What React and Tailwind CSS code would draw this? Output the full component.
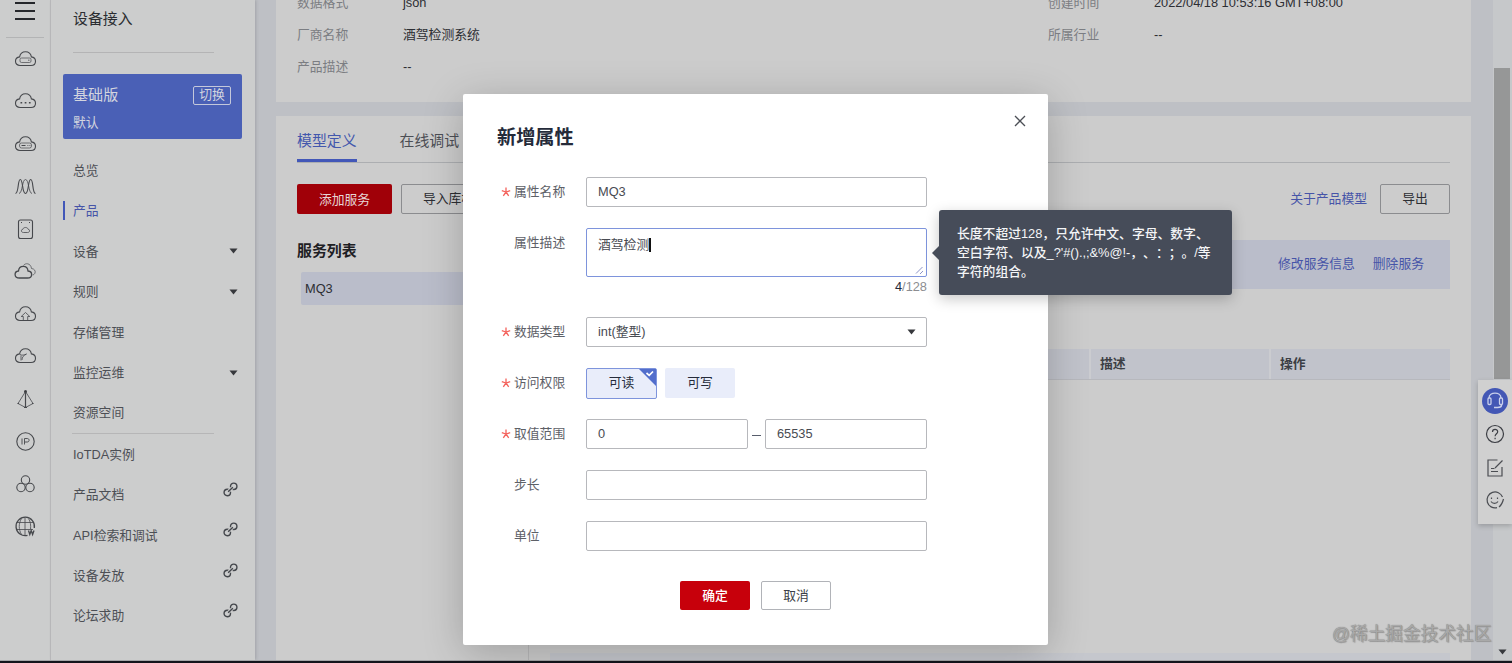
import React from 'react';

const CLOUD = 'M6 17.5 C3.2 17.5 1.5 15.6 1.5 13.2 C1.5 10.8 3.2 9.2 5.6 8.9 C6.2 5.8 8.6 3.8 11.5 3.8 C14.4 3.8 16.8 5.8 17.4 8.9 C19.8 9.2 21.5 10.8 21.5 13.2 C21.5 15.6 19.8 17.5 17 17.5 Z';

const railIcons = [
  <>
    <path d={CLOUD} />
    <rect x="6" y="10" width="11" height="4.5" rx="1.5" strokeWidth=".7" />
    <path d="M14 12.2h1.5" strokeWidth=".8" />
  </>,
  <>
    <path d={CLOUD} />
    <path d="M6.500 12.800h1.700M10.700 12.800h1.700M14.900 12.800h1.700" strokeWidth="1.600" />
  </>,
  <>
    <path d={CLOUD} />
    <rect x="5.5" y="10" width="12" height="5" rx="2" strokeWidth=".7" />
    <path d="M7.5 12.5h4M13.5 12.5h.8M15.5 12.5h.8" strokeWidth="1.2" />
  </>,
  <>
    <path d="M1.500 18.500C5 18 3.500 4.500 6.300 4.500S8 18.500 11.500 18.500 13.800 4.500 16.700 4.500 18 18 21.500 18.500" />
    <path d="M5 18.500C8.700 18 8 4.500 11.500 4.500S14.300 18 18 18.500" strokeWidth=".8" />
  </>,
  <>
    <rect x="4.500" y="2" width="14" height="18.500" rx="2" />
    <path d="M7 4.500h1M15 4.500h1" />
    <path d="M9.500 14.500c-2.700 0-2.700-3 -.6-3.300 .6-2.300 4.600-2.300 5.200 0 2.100 .3 2.100 3.300-.6 3.300z" strokeWidth=".8" />
  </>,
  <>
    <path d="M5.500 18C-.2 18-.2 11.500 4.500 11 5 4.800 13.500 4.800 14 11 19 11.500 18.800 18 13.500 18z" strokeWidth="1.300" />
    <path d="M9.500 5.500C11 2.800 16.800 2.800 17.500 8.500 22.500 9 22 14.500 18.500 15" strokeWidth=".7" />
  </>,
  <>
    <path d={CLOUD} />
    <path d="M9.300 17v-3.500H7.200L11.500 9.500l4.300 4h-2.100V17" strokeWidth=".8" />
  </>,
  <>
    <path d={CLOUD} />
    <path d="M6 9.500c2 1 4 .8 6.500-.5M8 15c0-3 1.500-4.500 4.500-6M7 10.500v5" strokeWidth=".8" />
  </>,
  <>
    <path d="M11.500 3.500L4 15.500l7.500 4 7.500-4z" strokeWidth=".8" />
    <path d="M11.500 3v16.500" strokeWidth="1.200" />
    <circle cx="11.500" cy="3.500" r="1" fill="#333" />
    <path d="M3.500 15.500h1.500M18 15.500h1.500M10 19.500h3" />
  </>,
  <>
    <circle cx="11.500" cy="11.500" r="8.700" />
    <path d="M8 8.500v6M10.500 14.500v-6h2.800c2.400 0 2.400 3.500 0 3.500h-2.800" strokeWidth=".9" />
  </>,
  <>
    <circle cx="11.500" cy="7" r="4.200" />
    <circle cx="7" cy="14.500" r="4.200" />
    <circle cx="16" cy="14.500" r="4.200" />
  </>,
  <>
    <path d="M13.500 20.300A9.200 9.200 0 1 1 20.300 13" strokeWidth="1.300" />
    <path d="M11 2.500v18M2.500 7.500h17M2 14.500h17M7.500 3.500c-3 5-3 11 0 16M14.500 3.500c2 3 2.500 7 2 10.500" strokeWidth=".8" />
    <path d="M14.500 15.500l1.300 4 1.400-4 1.400 4 1.400-4" strokeWidth="1.300" />
  </>,
];

const menuTop = [
  { name: '总览' },
  { name: '产品', active: true },
  { name: '设备', arrow: true },
  { name: '规则', arrow: true },
  { name: '存储管理' },
  { name: '监控运维', arrow: true },
  { name: '资源空间' },
];

const menuBottom = [
  { name: 'IoTDA实例' },
  { name: '产品文档', link: true },
  { name: 'API检索和调试', link: true },
  { name: '设备发放', link: true },
  { name: '论坛求助', link: true },
];

const Caret = () => (
  <svg width="9" height="6" viewBox="0 0 9 6" fill="#36383c">
    <path d="M.5.500h8L4.500 5.500z" />
  </svg>
);

const LinkIcon = () => (
  <svg width="15" height="15" viewBox="0 0 14 14" fill="none" stroke="#44474c" strokeWidth="1.300" className="-mt-[11px]">
    <circle cx="4" cy="9.800" r="3" />
    <circle cx="10" cy="4" r="3" />
    <path d="M5.200 8.600L8.800 5.200" stroke="#cccdcd" strokeWidth="3" />
    <path d="M4.800 9L9.200 4.800" />
  </svg>
);

const Rail = () => (
  <div className="w-[51px] shrink-0 border-r border-[#bcbcbe] flex flex-col items-center">
    <div className="h-[38px] w-[38px] shrink-0 border-b border-[#b3b4b5] flex flex-col items-center gap-[6px] pt-[2px]">
      <span className="w-5 h-[2px] bg-[#25272b]" />
      <span className="w-5 h-[2px] bg-[#25272b]" />
      <span className="w-5 h-[2px] bg-[#25272b]" />
    </div>
    <div className="flex flex-col">
      {railIcons.map((icon, i) => (
        <div key={i} className="h-[42.500px] flex items-center justify-center">
          <svg width="23" height="23" viewBox="0 0 23 23" fill="none" stroke="#46484c" strokeWidth="1.100">
            {icon}
          </svg>
        </div>
      ))}
    </div>
  </div>
);

const MenuItem = ({ item }) => (
  <div className="h-[40.400px] flex items-center justify-between pl-[10px] pr-[4px] relative">
    {item.active && <span className="absolute left-0 top-[10px] w-[2px] h-[19px] bg-[#4257b8]" />}
    <span className={item.active ? 'text-[#4654a8]' : 'text-[#4c4f55]'}>{item.name}</span>
    {item.arrow && <Caret />}
    {item.link && <LinkIcon />}
  </div>
);

const Sidebar = () => (
  <div className="w-[204px] shrink-0 pl-3 pr-[13px] shadow-[1px_0_3px_rgba(60,60,70,0.22)] relative">
    <div className="h-[53px] mx-[10px] mr-[28px] border-b border-[#b4b4b5] pt-[7px] text-[14.900px] leading-6 text-[#2b2d31]">
      设备接入
    </div>
    <div className="mt-[21px] h-[65px] rounded-[2px] bg-[#4a60b6] px-[10px] text-[#d3d5df] flex flex-col">
      <div className="h-[42px] pr-[1px] flex items-center justify-between">
        <span className="text-[15.100px]">基础版</span>
        <span className="border border-[#c4c8db] rounded-[2px] w-[38px] h-[19px] flex items-center justify-center leading-none">
          切换
        </span>
      </div>
      <span className="leading-[14px]">默认</span>
    </div>
    <div className="pt-[11.500px]">
      {menuTop.map((item) => (
        <MenuItem key={item.name} item={item} />
      ))}
    </div>
    <div className="ml-[9px] mr-[28px] border-t border-[#b6b6b7]" />
    <div>
      {menuBottom.map((item) => (
        <MenuItem key={item.name} item={item} />
      ))}
    </div>
  </div>
);

const InfoRow = ({ label, value, label2, value2 }) => (
  <div className="h-8 flex items-center">
    <span className="w-[106px] text-[#7b7d82]">{label}</span>
    <span className="w-[645px] text-[#2c2e33]">{value}</span>
    <span className="w-[106px] text-[#7b7d82]">{label2}</span>
    <span className="text-[#2c2e33]">{value2}</span>
  </div>
);

const Content = () => (
  <div className="flex-1 bg-[#bec0c5] pl-[21px] pr-[22px] flex flex-col gap-[14px] overflow-hidden">
    <div className="h-[102px] shrink-0 bg-[#cccccc] pl-[21px] overflow-hidden">
      <div className="-mt-[13px]">
        <InfoRow label="数据格式" value="json" label2="创建时间" value2="2022/04/18 10:53:16 GMT+08:00" />
        <InfoRow label="厂商名称" value="酒驾检测系统" label2="所属行业" value2="--" />
        <InfoRow label="产品描述" value="--" />
      </div>
    </div>
    <div className="flex-1 bg-[#cccccc] px-[21px]">
      <div className="h-[47px] border-b border-[#acaeb1] flex gap-[43px] text-[14.900px] leading-[50px]">
        <span className="h-[46px] border-b-[3px] border-[#4257b8] text-[#4257ad]">模型定义</span>
        <span className="text-[#4c4f55]">在线调试</span>
      </div>
      <div className="mt-[21px] flex items-center">
        <button className="w-[95px] h-[30px] rounded-[2px] bg-[#a00008] text-[#e6d5d5] pt-[1px]">添加服务</button>
        <button className="ml-[9px] w-[108px] h-[30px] rounded-[2px] border border-[#8b8c8f] text-[#2c2e33]">导入库模型</button>
        <span className="ml-auto text-[#4654a8]">关于产品模型</span>
        <button className="ml-[13px] w-[70px] h-[30px] rounded-[2px] border border-[#8b8c8f] text-[#2c2e33]">导出</button>
      </div>
      <div className="flex mt-[25px] h-[421px]">
        <div className="w-[232px] shrink-0 border-r border-[#b9b9ba]">
          <div className="h-[33px] leading-6 text-[14.900px] font-bold text-[#1e2024]">服务列表</div>
          <div className="ml-1 h-[33px] bg-[#babdca] rounded-l-[2px] pl-[4px] flex items-center text-[#2c2e33]">MQ3</div>
        </div>
        <div className="flex-1 pl-[21px] flex flex-col">
          <div className="mt-[1px] h-[49px] bg-[#babdca] flex items-center justify-end gap-[18px] pr-[26px] pb-[2px] text-[#4654a8]">
            <span>修改服务信息</span>
            <span>删除服务</span>
          </div>
          <div className="mt-[60px] h-[31px] bg-[#c1c3cb] border-b border-[#b7b8bd] flex justify-end font-bold text-[#3c3f45] leading-[29px]">
            <span className="w-[180px] border-l-2 border-[#cbccd0] pl-[9px]">描述</span>
            <span className="w-[181px] border-l-2 border-[#cbccd0] pl-[9px]">操作</span>
          </div>
          <div className="mt-auto h-[7px] bg-[#c5c7cd]" />
        </div>
      </div>
    </div>
  </div>
);

const Field = ({ label, required, className, children }) => (
  <div className={`flex ${className}`}>
    <div className="w-[123px] pl-[38px] flex items-center h-[30px] text-[#5d6067]">
      <svg width="10" height="10" viewBox="0 0 10 10" fill="none" stroke="#f4625c" strokeWidth="1.300" className="mr-[3px]">
        {required && <path d="M5 .5V5M.8 3.700L5 5M9.200 3.700L5 5M2.300 8.800L5 5M7.700 8.800L5 5" />}
      </svg>
      {label}
    </div>
    {children}
  </div>
);

const box = 'border border-[#b7b8bc] rounded-[2px] h-[30px] px-[11px] flex items-center text-[#484b52]';

const Modal = () => (
  <div className="absolute left-[463px] top-[94px] w-[585px] h-[551px] bg-white rounded-[2px] shadow-[0_8px_40px_rgba(0,0,0,0.22)]">
    <div className="h-[83px] pl-[34px] pr-[22px] pt-[21px] flex items-start justify-between">
      <h2 className="pt-[9px] text-[19.200px] leading-7 font-bold text-[#252b3a]">新增属性</h2>
      <svg width="12" height="12" viewBox="0 0 12 12" stroke="#4c4f56" strokeWidth="1.300">
        <path d="M1 1l10 10M11 1L1 11" />
      </svg>
    </div>
    <Field label="属性名称" required className="h-[51px]">
      <div className={`${box} w-[341px]`}>MQ3</div>
    </Field>
    <Field label="属性描述" className="h-[89px]">
      <div className="w-[341px]">
        <div className="relative h-[49px] border border-[#7e94dc] rounded-[2px] px-[11px] pt-[7px] leading-[18px] text-[#484b52]">
          酒驾检测
          <span className="inline-block w-[1.500px] h-[14px] bg-[#111] align-middle -mt-[2px]" />
          <svg width="9" height="9" viewBox="0 0 9 9" stroke="#8b93c8" className="absolute right-[2px] bottom-[1px]">
            <path d="M1 7.500L7.500 1M5 8l3-3" />
          </svg>
        </div>
        <div className="text-right leading-5 text-[#8c8d91]">
          <span className="text-[#252b3a]">4</span>/128
        </div>
      </div>
    </Field>
    <Field label="数据类型" required className="h-[51px]">
      <div className={`${box} w-[341px] justify-between !pr-[10px]`}>
        int(整型)
        <Caret />
      </div>
    </Field>
    <Field label="访问权限" required className="h-[51px]">
      <div className="relative w-[71px] h-[31px] border border-[#7e94dc] rounded-[2px] bg-[#e9edfa] flex items-center justify-center pb-[1px] text-[#252b3a]">
        可读
        <svg width="17" height="17" viewBox="0 0 17 17" className="absolute right-0 top-0">
          <path d="M0 0h17v17z" fill="#526ecc" />
          <path d="M7.500 4l2.700 2.300L14 2.500" fill="none" stroke="#fff" strokeWidth="1.700" />
        </svg>
      </div>
      <div className="ml-[8px] w-[70px] h-[30px] rounded-[2px] bg-[#e9edfa] flex items-center justify-center text-[#252b3a]">
        可写
      </div>
    </Field>
    <Field label="取值范围" required className="h-[51px]">
      <div className={`${box} w-[162px]`}>0</div>
      <div className="w-[17px] h-[33px] flex items-center justify-center">
        <span className="w-[9px] h-px bg-[#575d6c]" />
      </div>
      <div className={`${box} w-[162px]`}>65535</div>
    </Field>
    <Field label="步长" className="h-[51px]">
      <div className={`${box} w-[341px]`} />
    </Field>
    <Field label="单位" className="h-[60px]">
      <div className={`${box} w-[341px]`} />
    </Field>
    <div className="flex gap-[11px] pl-[217px]">
      <button className="w-[70px] h-[29px] rounded-[2px] bg-[#c7000b] text-white font-medium">确定</button>
      <button className="w-[70px] h-[29px] rounded-[2px] border border-[#b1b3b8] text-[#3c3f47]">取消</button>
    </div>
  </div>
);

const Tooltip = () => (
  <div className="absolute left-[939px] top-[210px] w-[293px] h-[85px] rounded-[3px] bg-[#464c59] pl-[18px] pt-[14px] text-[#f4f5f7] font-medium leading-[19.200px] whitespace-nowrap [text-spacing-trim:space-all] shadow-[0_4px_14px_rgba(0,0,0,0.22)]">
    <span className="absolute -left-[7px] top-[36px] border-y-[7px] border-y-transparent border-r-[7px] border-r-[#464c59]" />
    <div>长度不超过128，只允许中文、字母、数字、</div>
    <div>空白字符、以及_?'#().,;&amp;%@!-，、：；。/等</div>
    <div>字符的组合。</div>
  </div>
);

const FloatBar = () => (
  <div className="absolute left-[1478px] top-[380px] w-[34px] h-[144px] bg-[#d0d0d0] pt-[8px] flex flex-col items-center shadow-[0_2px_5px_rgba(0,0,0,0.2)]">
    <svg width="26" height="26" viewBox="0 0 26 26" fill="none" stroke="#c9d0ec" strokeWidth="1.300">
      <circle cx="13" cy="13" r="13" fill="#4357b5" stroke="none" />
      <path d="M7 10C7 3.500 19 3.500 19 10" />
      <rect x="6" y="10" width="3" height="6.500" rx="1" />
      <rect x="17.500" y="10" width="3" height="6.500" rx="1" />
      <path d="M19.500 17c0 2-2 2.500-4 2.500M12 19.500h4" strokeWidth="1.600" />
    </svg>
    <svg width="20" height="20" viewBox="0 0 20 20" fill="none" stroke="#3c3e44" strokeWidth="1.200" className="mt-[10px]">
      <circle cx="10" cy="10" r="8.500" />
      <path d="M7.500 8c0-3.500 5.200-3.300 5.200-.3 0 2-2.600 2.200-2.600 4.600M10.100 13.800v1.400" />
    </svg>
    <svg width="18" height="20" viewBox="0 0 18 20" fill="none" stroke="#4b4d52" strokeWidth="1.200" className="mt-[14px]">
      <path d="M11.500 2H2v16h14V9M9 10l7.500-7.500M5 10.500h3.500M5 13.500h7" />
    </svg>
    <svg width="20" height="20" viewBox="0 0 20 20" fill="none" stroke="#4b4d52" strokeWidth="1.200" className="mt-[12px]">
      <path d="M12 17.700A8 8 0 1 1 17.500 7M18.500 9c-1 4-2.500 6.500-4.500 8" />
      <path d="M6.500 7.500v1.500M12.500 7.500v1.500M6 11.500c1.500 2.500 5.500 2.500 7 0" />
    </svg>
  </div>
);

export default function App() {
  return (
    <div className="relative w-[1512px] h-[663px] overflow-hidden flex flex-col bg-[#cccdcd] text-[12.800px] font-['Liberation_Sans','Noto_Sans_CJK_SC',sans-serif]">
      <div className="flex h-[660px] overflow-hidden">
        <Rail />
        <Sidebar />
        <Content />
        <div className="w-[19px] bg-[#c6c8ca] flex flex-col items-center justify-between pt-[68px] pb-[5px] pr-[1px]">
          <div className="w-4 h-[311px] bg-[#969797]" />
          <Caret />
        </div>
      </div>
      <Modal />
      <FloatBar />
      <Tooltip />
      <div className="absolute left-[1332px] top-[621px] text-[17.700px] leading-[26px] whitespace-nowrap text-[#a9a9a9] [text-shadow:0_0_1px_#777,1px_1px_1px_#999]">
        @稀土掘金技术社区
      </div>
      <div className="h-px bg-[#a5a6a8]" />
      <div className="h-[2px] bg-[#14151c]" />
    </div>
  );
}
